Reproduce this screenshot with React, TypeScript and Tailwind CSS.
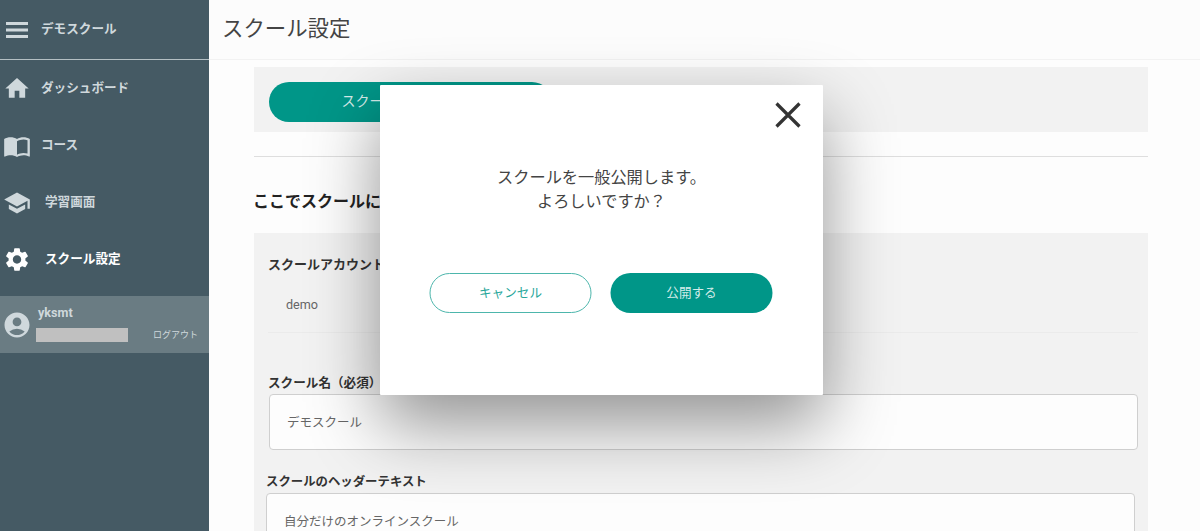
import React from "react";
import { MdHome, MdImportContacts, MdSchool, MdSettings, MdAccountCircle } from "react-icons/md";

const font = { fontFamily: 'Roboto, "Noto Sans CJK JP", sans-serif' };

function NavItem({ icon, label, gap, active }: { icon: React.ReactNode; label: string; gap: string; active?: boolean }) {
  return (
    <div className={`h-[57px] flex items-center pl-[3px] ${active ? "text-white" : "text-[#cfd8dc]"}`}>
      <div className="w-[28px] h-[28px] flex items-center justify-center shrink-0">{icon}</div>
      <span className={`text-[12.6px] leading-[16px] font-bold -translate-y-[1px] ${gap}`}>{label}</span>
    </div>
  );
}

export default function App() {
  return (
    <div className="relative w-[1200px] h-[531px] overflow-hidden flex bg-white text-[#333]" style={font}>
      <aside className="w-[209px] shrink-0 bg-[#455a64] flex flex-col">
        <div className="h-[60px] border-b border-[#b4bfc3] flex items-center pl-[6px] text-[#cfd8dc]">
          <svg width="22" height="16" viewBox="0 0 22 16" fill="currentColor">
            <rect x="0" y="0" width="22" height="3" />
            <rect x="0" y="6.5" width="22" height="3" />
            <rect x="0" y="13" width="22" height="3" />
          </svg>
          <span className="ml-[13px] text-[12.6px] leading-[16px] font-bold -translate-y-[1px]">デモスクール</span>
        </div>
        <NavItem icon={<MdHome size={31} />} label="ダッシュボード" gap="ml-[10px]" />
        <NavItem icon={<MdImportContacts size={32} />} label="コース" gap="ml-[10px]" />
        <NavItem icon={<MdSchool size={32} />} label="学習画面" gap="ml-[14px]" />
        <NavItem icon={<MdSettings size={31} />} label="スクール設定" gap="ml-[14px]" active />
        <div className="h-[57px] mt-[8px] bg-[#6a7c83] flex items-center pl-[2px] text-[#cfd8dc]">
          <div className="w-[30px] flex items-center justify-center shrink-0"><MdAccountCircle size={30} /></div>
          <div className="flex-1 ml-[4px] pr-[11px]">
            <div className="ml-[2px] text-[12.6px] font-bold leading-[18px] -mt-[4px]">yksmt</div>
            <div className="flex items-end justify-between mt-[6px]">
              <div className="w-[92px] h-[14px] bg-[#c0c0c0]" />
              <span className="text-[9px] leading-[14px]">ログアウト</span>
            </div>
          </div>
        </div>
      </aside>
      <main className="flex-1 flex flex-col min-w-0 bg-[#fdfdfd]">
        <header className="h-[60px] shrink-0 border-b border-[#f2f2f2] bg-[#fcfcfc] flex items-center pl-[13px]">
          <h1 className="text-[21.4px] font-normal text-[#444]">スクール設定</h1>
        </header>
        <div className="ml-[45px] w-[894px] pt-[7px]">
          <div className="h-[65px] bg-[#f2f2f2] flex items-center pl-[15px]">
            <div className="w-[283px] h-[40px] mt-[4px] rounded-[20px] bg-[#009688] text-[#d5ecea] text-[14px] flex items-center justify-center pl-[16px]">スクールを一般公開する</div>
          </div>
          <div className="mt-[24px] border-t border-[#dedede]" />
          <h2 className="mt-[33px] -ml-[1px] text-[16px] leading-[24px] font-bold text-[#222]">ここでスクールに関する設定ができます</h2>
          <section className="mt-[19px] bg-[#f2f2f2] h-[320px] pt-[23px]">
            <div className="ml-[14px] text-[13px] leading-[18px] font-bold text-[#333]">スクールアカウント名</div>
            <div className="ml-[32px] mt-[22px] text-[12.6px] leading-[18px] text-[#666]">demo</div>
            <div className="ml-[14px] mr-[10px] mt-[18px] border-t border-[#ebebeb]" />
            <div className="ml-[14px] mt-[41px] text-[12.6px] leading-[18px] font-bold text-[#333]">スクール名（必須）</div>
            <div className="ml-[15px] mr-[10px] mt-[2px] h-[56px] bg-[#fdfdfd] border border-[#cfcfcf] rounded-[4px] flex items-center pl-[17px] pt-[2px] text-[12.5px] text-[#666]">デモスクール</div>
            <div className="ml-[12px] mt-[23px] text-[12.4px] leading-[18px] font-bold text-[#333]">スクールのヘッダーテキスト</div>
            <div className="ml-[12px] mr-[13px] mt-[2px] h-[58px] bg-[#fdfdfd] border border-[#cfcfcf] rounded-[4px] flex items-center pl-[17px] text-[12.5px] text-[#666]">自分だけのオンラインスクール</div>
          </section>
        </div>
      </main>
      <div className="absolute left-[380px] top-[85px] w-[443px] h-[310px] bg-white rounded-[1px] shadow-[0_30px_70px_rgba(0,0,0,0.42)] flex flex-col items-center">
        <svg className="absolute right-[22px] top-[17px]" width="26" height="26" viewBox="0 0 26 26" fill="none" stroke="#333" strokeWidth="3.2">
          <path d="M1.5 1.5 L24.5 24.5 M24.5 1.5 L1.5 24.5" />
        </svg>
        <p className="mt-[81px] text-[16.2px] leading-[24px] text-[#444] text-center">スクールを一般公開します。<br />よろしいですか？</p>
        <div className="mt-[59px] flex gap-[19px] -translate-x-[0.5px]">
          <button className="w-[162px] h-[40px] rounded-[20px] bg-white border border-[#4db6ac] text-[#26a69a] text-[12.6px]">キャンセル</button>
          <button className="w-[162px] h-[40px] rounded-[20px] bg-[#009688] text-[#d5ecea] text-[12.6px]">公開する</button>
        </div>
      </div>
    </div>
  );
}
